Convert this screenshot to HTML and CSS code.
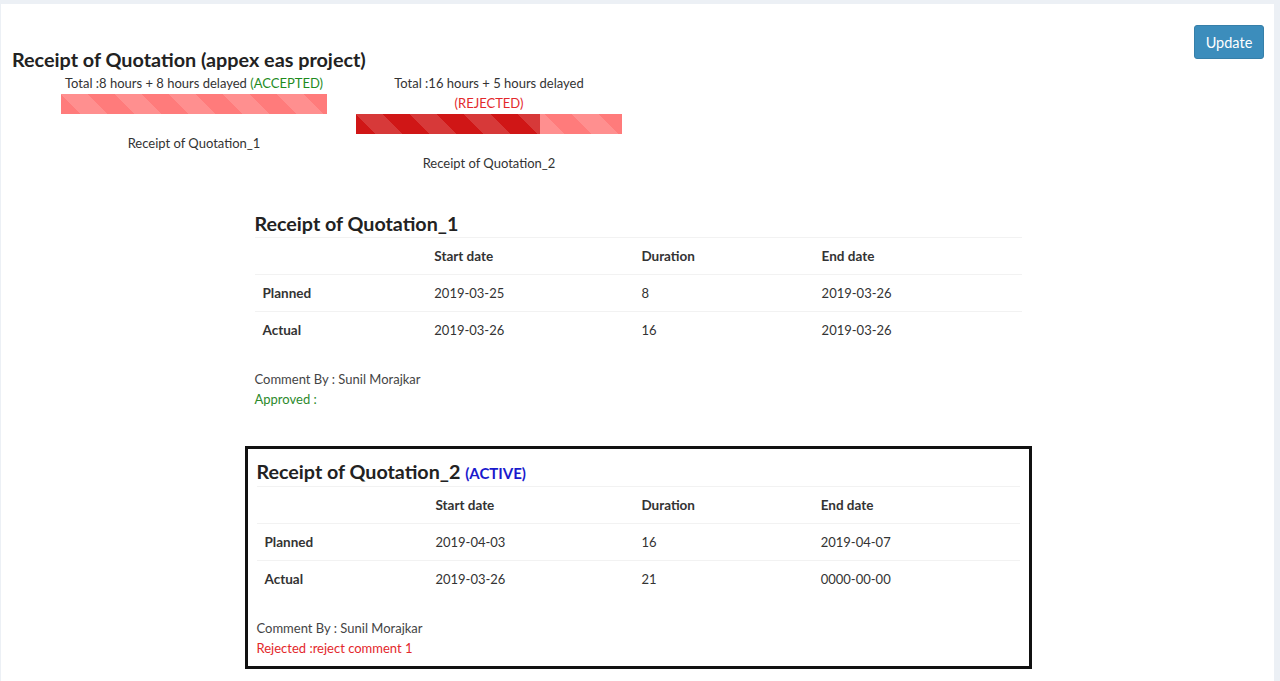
FILE: index.html
```html
<!DOCTYPE html>
<html lang="en">
<head>
<meta charset="utf-8">
<title>Receipt of Quotation</title>
<link rel="stylesheet" href="styles.css">
</head>
<body>
<div class="card">
  <button class="btn-update" type="button">Update</button>
  <h2 class="page-title">Receipt of Quotation (appex eas project)</h2>

  <div class="timeline">
    <div class="stage">
      <div class="stage-total">Total :8 hours + 8 hours delayed <span class="status-accepted">(ACCEPTED)</span></div>
      <div class="bar"><div class="bar-fill" style="width:0%"></div></div>
      <div class="stage-name">Receipt of Quotation_1</div>
    </div>
    <div class="stage">
      <div class="stage-total">Total :16 hours + 5 hours delayed <span class="status-rejected">(REJECTED)</span></div>
      <div class="bar"><div class="bar-fill" style="width:69%"></div></div>
      <div class="stage-name">Receipt of Quotation_2</div>
    </div>
  </div>

  <div class="detail">
    <h3 class="detail-title">Receipt of Quotation_1</h3>
    <table class="dates">
      <colgroup><col class="c1"><col class="c2"><col class="c3"><col class="c4"></colgroup>
      <tr><th></th><th>Start date</th><th>Duration</th><th>End date</th></tr>
      <tr><th>Planned</th><td>2019-03-25</td><td>8</td><td>2019-03-26</td></tr>
      <tr><th>Actual</th><td>2019-03-26</td><td>16</td><td>2019-03-26</td></tr>
    </table>
    <div class="comment">
      <div class="comment-by">Comment By : Sunil Morajkar</div>
      <div class="comment-ok">Approved :</div>
    </div>
  </div>

  <div class="detail detail-active">
    <h3 class="detail-title">Receipt of Quotation_2 <span class="active-tag">(ACTIVE)</span></h3>
    <table class="dates">
      <colgroup><col class="c1"><col class="c2"><col class="c3"><col class="c4"></colgroup>
      <tr><th></th><th>Start date</th><th>Duration</th><th>End date</th></tr>
      <tr><th>Planned</th><td>2019-04-03</td><td>16</td><td>2019-04-07</td></tr>
      <tr><th>Actual</th><td>2019-03-26</td><td>21</td><td>0000-00-00</td></tr>
    </table>
    <div class="comment">
      <div class="comment-by">Comment By : Sunil Morajkar</div>
      <div class="comment-bad">Rejected :reject comment 1</div>
    </div>
  </div>
</div>
</body>
</html>
```

FILE: styles.css
```css
* { box-sizing: border-box; }

html, body {
  margin: 0;
  padding: 0;
}

body {
  background: #ecf0f5;
  padding: 4px 6px 0 1px;
  font-family: Lato, "Source Sans Pro", "Helvetica Neue", Arial, sans-serif;
  font-size: 13px;
  line-height: 20px;
  color: #333;
}

.card {
  background: #fff;
  min-height: calc(100vh - 4px);
  padding: 21px 10px 20px 11px;
}

.btn-update {
  float: right;
  width: 70px;
  height: 34px;
  background: #3c8dbc;
  border: 1px solid #367fa9;
  border-radius: 3px;
  color: #fff;
  font-family: inherit;
  font-size: 14.5px;
  padding: 0;
  cursor: pointer;
}

.page-title {
  margin: 21px 0 0;
  font-size: 19.8px;
  line-height: 26px;
  font-weight: 700;
  color: #222;
}

.timeline {
  display: flex;
  gap: 29px;
  margin-top: 1px;
  margin-left: 49px;
  align-items: flex-start;
}

.stage {
  width: 266px;
  text-align: center;
}

.stage-total {
  color: #333;
}

.status-accepted { color: #1e8b1e; }
.status-rejected {
  display: block;
  color: #e3282b;
}

.bar {
  height: 20px;
  margin: 1px 0 0;
  background-color: #ff7b7b;
  background-image: linear-gradient(45deg, rgba(255,255,255,.15) 25%, transparent 25%, transparent 50%, rgba(255,255,255,.15) 50%, rgba(255,255,255,.15) 75%, transparent 75%, transparent);
  background-size: 54px 54px;
  overflow: hidden;
}

.bar-fill {
  height: 100%;
  background-color: #d01616;
  background-image: linear-gradient(45deg, rgba(255,255,255,.15) 25%, transparent 25%, transparent 50%, rgba(255,255,255,.15) 50%, rgba(255,255,255,.15) 75%, transparent 75%, transparent);
  background-size: 54px 54px;
}

.stage-name {
  margin-top: 19px;
  color: #333;
}

.detail {
  width: 787px;
  margin: 25px auto 0;
  border: 2px solid transparent;
  padding: 11px 8px 9px 8px;
}

.detail + .detail {
  margin-top: 26px;
}

.detail-active {
  border: 3px solid #111;
  padding: 10px 9px 8px 9px;
}

.detail-title {
  margin: 0;
  font-size: 19.7px;
  line-height: 26px;
  font-weight: 700;
  color: #222;
}

.active-tag {
  font-size: 15px;
  color: #1a1acd;
}

.dates {
  width: 100%;
  border-collapse: collapse;
  table-layout: fixed;
}

.dates .c1 { width: 22.4%; }
.dates .c2 { width: 27%; }
.dates .c3 { width: 23.5%; }
.dates .c4 { width: 27.1%; }

.dates th,
.dates td {
  padding: 8px;
  line-height: 20px;
  border-top: 1px solid #f2f2f2;
  text-align: left;
  vertical-align: top;
}

.dates th {
  font-weight: 700;
  font-size: 13.5px;
  color: #333;
}

.dates td {
  color: #333;
}

.comment {
  margin-top: 21px;
}

.comment-by { color: #444; }
.comment-ok { color: #2c8a2c; }
.comment-bad { color: #e3282b; }
```
